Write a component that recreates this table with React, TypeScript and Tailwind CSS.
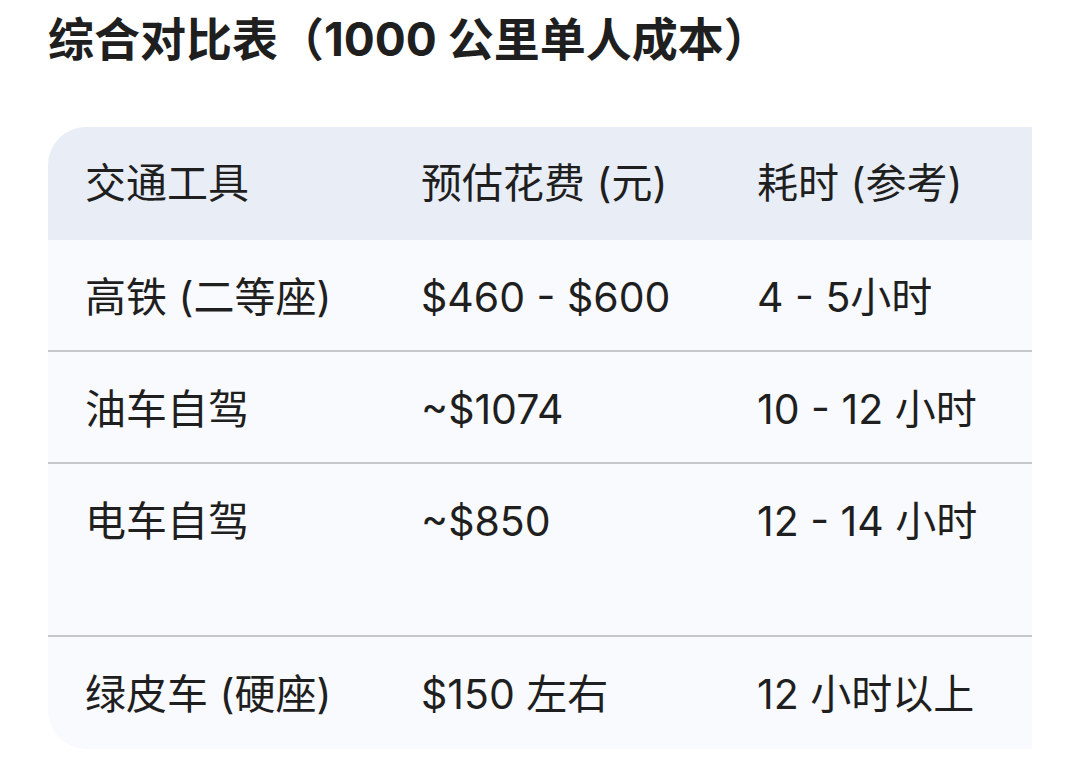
import React from "react";

const rows = [
  { name: "高铁 (二等座)", cost: "$460 - $600", time: "4 - 5小时", tall: false },
  { name: "油车自驾", cost: "~$1074", time: "10 - 12 小时", tall: false },
  { name: "电车自驾", cost: "~$850", time: "12 - 14 小时", tall: true },
  { name: "绿皮车 (硬座)", cost: "$150 左右", time: "12 小时以上", tall: false },
];

const font = {
  fontFamily: 'Inter, "Noto Sans CJK SC", sans-serif',
};

const App = () => {
  return (
    <div className="min-h-[777px] w-[1080px] bg-white text-[#1f1f1f]" style={font}>
      <h1 className="pl-12 pt-[9px] text-[46px] font-bold leading-[60px]">
        综合对比表（1000 公里单人成本）
      </h1>

      <div className="ml-12 mr-12 mt-[58px] overflow-hidden">
        <table className="w-[1080px] table-fixed border-collapse overflow-hidden rounded-l-[38px] bg-[#f8fafd] text-[41px] leading-[60px]">
          <thead>
            <tr className="bg-[#e9eef6]">
              <th className="w-[336px] pt-[26px] pb-[27px] pl-[37px] text-left font-normal">交通工具</th>
              <th className="w-[336px] pt-[26px] pb-[27px] pl-[37px] text-left font-normal">预估花费 (元)</th>
              <th className="w-[336px] pt-[26px] pb-[27px] pl-[37px] text-left font-normal">耗时 (参考)</th>
              <th className="pt-[26px] pb-[27px] pl-[37px] text-left font-normal"></th>
            </tr>
          </thead>
          <tbody>
            {rows.map((row, i) => {
              const border = i > 0 ? " border-t-2 border-[#c7c8cc]" : "";
              const last = i === rows.length - 1;
              const pad = row.tall ? "pt-[27px] pb-[84px]" : last ? "pt-[27px] pb-[25px]" : "pt-[27px] pb-[23px]";
              return (
                <tr key={row.name}>
                  <td className={"pl-[37px] align-top " + pad + border}>{row.name}</td>
                  <td className={"pl-[37px] align-top pt-[27px]" + border}>{row.cost}</td>
                  <td className={"pl-[37px] align-top pt-[27px]" + border}>{row.time}</td>
                  <td className={border.trim()}></td>
                </tr>
              );
            })}
          </tbody>
        </table>
      </div>
    </div>
  );
};

export default App;
